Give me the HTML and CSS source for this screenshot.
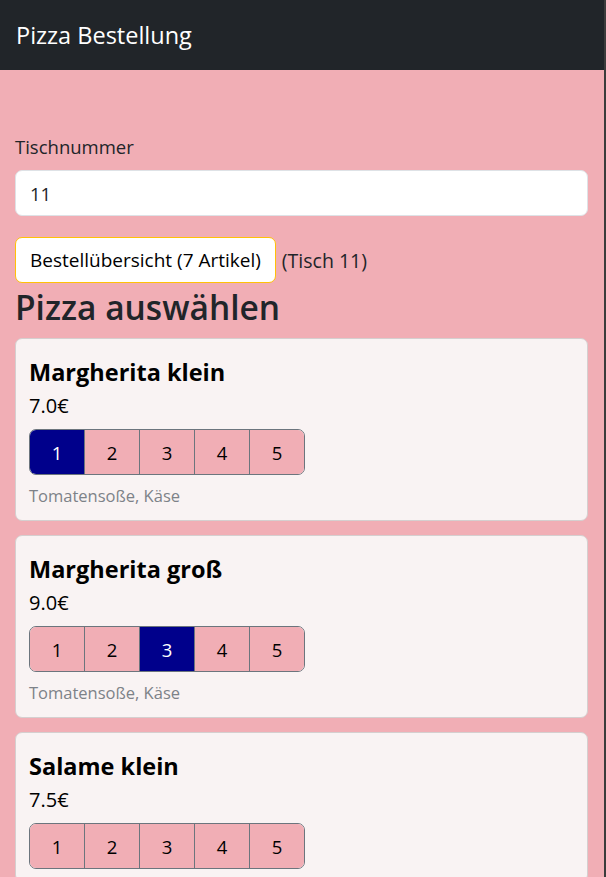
FILE: index.html
```html
<!DOCTYPE html>
<html lang="de">
<head>
<meta charset="utf-8">
<title>Pizza Bestellung</title>
<link rel="stylesheet" href="styles.css">
</head>
<body>
<div class="page">
  <nav class="navbar">
    <span class="brand">Pizza Bestellung</span>
  </nav>
  <main class="container">
    <label class="label" for="tisch">Tischnummer</label>
    <input class="input" id="tisch" type="text" value="11">
    <div class="summary-row">
      <button class="btn-summary" type="button">Bestellübersicht (7 Artikel)</button>
      <span class="tisch">(Tisch 11)</span>
    </div>
    <h2 class="section-title">Pizza auswählen</h2>

    <div class="card">
      <h5 class="card-title">Margherita klein</h5>
      <div class="price">7.0€</div>
      <div class="qty">
        <button class="qty-btn active" type="button">1</button>
        <button class="qty-btn" type="button">2</button>
        <button class="qty-btn" type="button">3</button>
        <button class="qty-btn" type="button">4</button>
        <button class="qty-btn" type="button">5</button>
      </div>
      <div class="desc">Tomatensoße, Käse</div>
    </div>

    <div class="card">
      <h5 class="card-title">Margherita groß</h5>
      <div class="price">9.0€</div>
      <div class="qty">
        <button class="qty-btn" type="button">1</button>
        <button class="qty-btn" type="button">2</button>
        <button class="qty-btn active" type="button">3</button>
        <button class="qty-btn" type="button">4</button>
        <button class="qty-btn" type="button">5</button>
      </div>
      <div class="desc">Tomatensoße, Käse</div>
    </div>

    <div class="card">
      <h5 class="card-title">Salame klein</h5>
      <div class="price">7.5€</div>
      <div class="qty">
        <button class="qty-btn" type="button">1</button>
        <button class="qty-btn" type="button">2</button>
        <button class="qty-btn" type="button">3</button>
        <button class="qty-btn" type="button">4</button>
        <button class="qty-btn" type="button">5</button>
      </div>
    </div>
  </main>
</div>
</body>
</html>
```

FILE: styles.css
```css
html {
  scrollbar-width: none;
}
html::-webkit-scrollbar {
  display: none;
}
body {
  margin: 0;
  background: #f1aeb5;
  font-family: "Open Sans", "Noto Sans", sans-serif;
  color: #212529;
}
.page {
  min-height: 100vh;
  border-right: 2px solid #3c3c3c;
  background: #f1aeb5;
}
.navbar {
  height: 70px;
  background: #212529;
  display: flex;
  align-items: center;
  padding-left: 16px;
}
.brand {
  color: #ffffff;
  font-size: 23.5px;
}
.container {
  padding: 62px 16px 0 15px;
}
.label {
  display: block;
  font-size: 18.5px;
  line-height: 29px;
  margin-bottom: 9px;
  color: #212529;
}
.input {
  display: block;
  box-sizing: border-box;
  width: 100%;
  height: 46px;
  margin: 0 0 21px;
  padding: 0 14px;
  border: 1px solid #dee2e6;
  border-radius: 7px;
  background: #ffffff;
  font-family: inherit;
  font-size: 18.5px;
  color: #212529;
}
.summary-row {
  display: flex;
  align-items: center;
  gap: 6px;
}
.btn-summary {
  height: 46px;
  padding: 0 14px;
  border: 1px solid #ffc107;
  border-radius: 7px;
  background: #ffffff;
  font-family: inherit;
  font-size: 19px;
  color: #000000;
}
.tisch {
  font-size: 19.5px;
  color: #212529;
}
.section-title {
  margin: 0 0 7px;
  font-size: 33.5px;
  line-height: 48px;
  font-weight: 600;
  color: #212529;
}
.card {
  background: #f9f3f3;
  border: 1px solid #d5cfcf;
  border-radius: 7px;
  padding: 18px 13px 12px;
  margin-bottom: 14px;
}
.card-title {
  margin: 0;
  font-size: 23.5px;
  line-height: 30px;
  font-weight: 700;
  color: #000000;
}
.price {
  margin-top: 4px;
  font-size: 20px;
  line-height: 30px;
  color: #000000;
}
.qty {
  display: flex;
  width: max-content;
  margin-top: 8px;
  border: 1px solid #6c757d;
  border-radius: 7px;
  overflow: hidden;
}
.qty-btn {
  box-sizing: border-box;
  width: 55px;
  height: 44px;
  padding: 0;
  border: 0;
  border-left: 1px solid #6c757d;
  background: #f1aeb5;
  font-family: inherit;
  font-size: 18.5px;
  color: #000000;
}
.qty-btn:first-child {
  width: 54px;
  border-left: 0;
}
.qty-btn.active {
  background: #00008b;
  color: #ffffff;
}
.desc {
  margin-top: 8px;
  font-size: 16.5px;
  line-height: 25px;
  color: #7d8288;
}
```
